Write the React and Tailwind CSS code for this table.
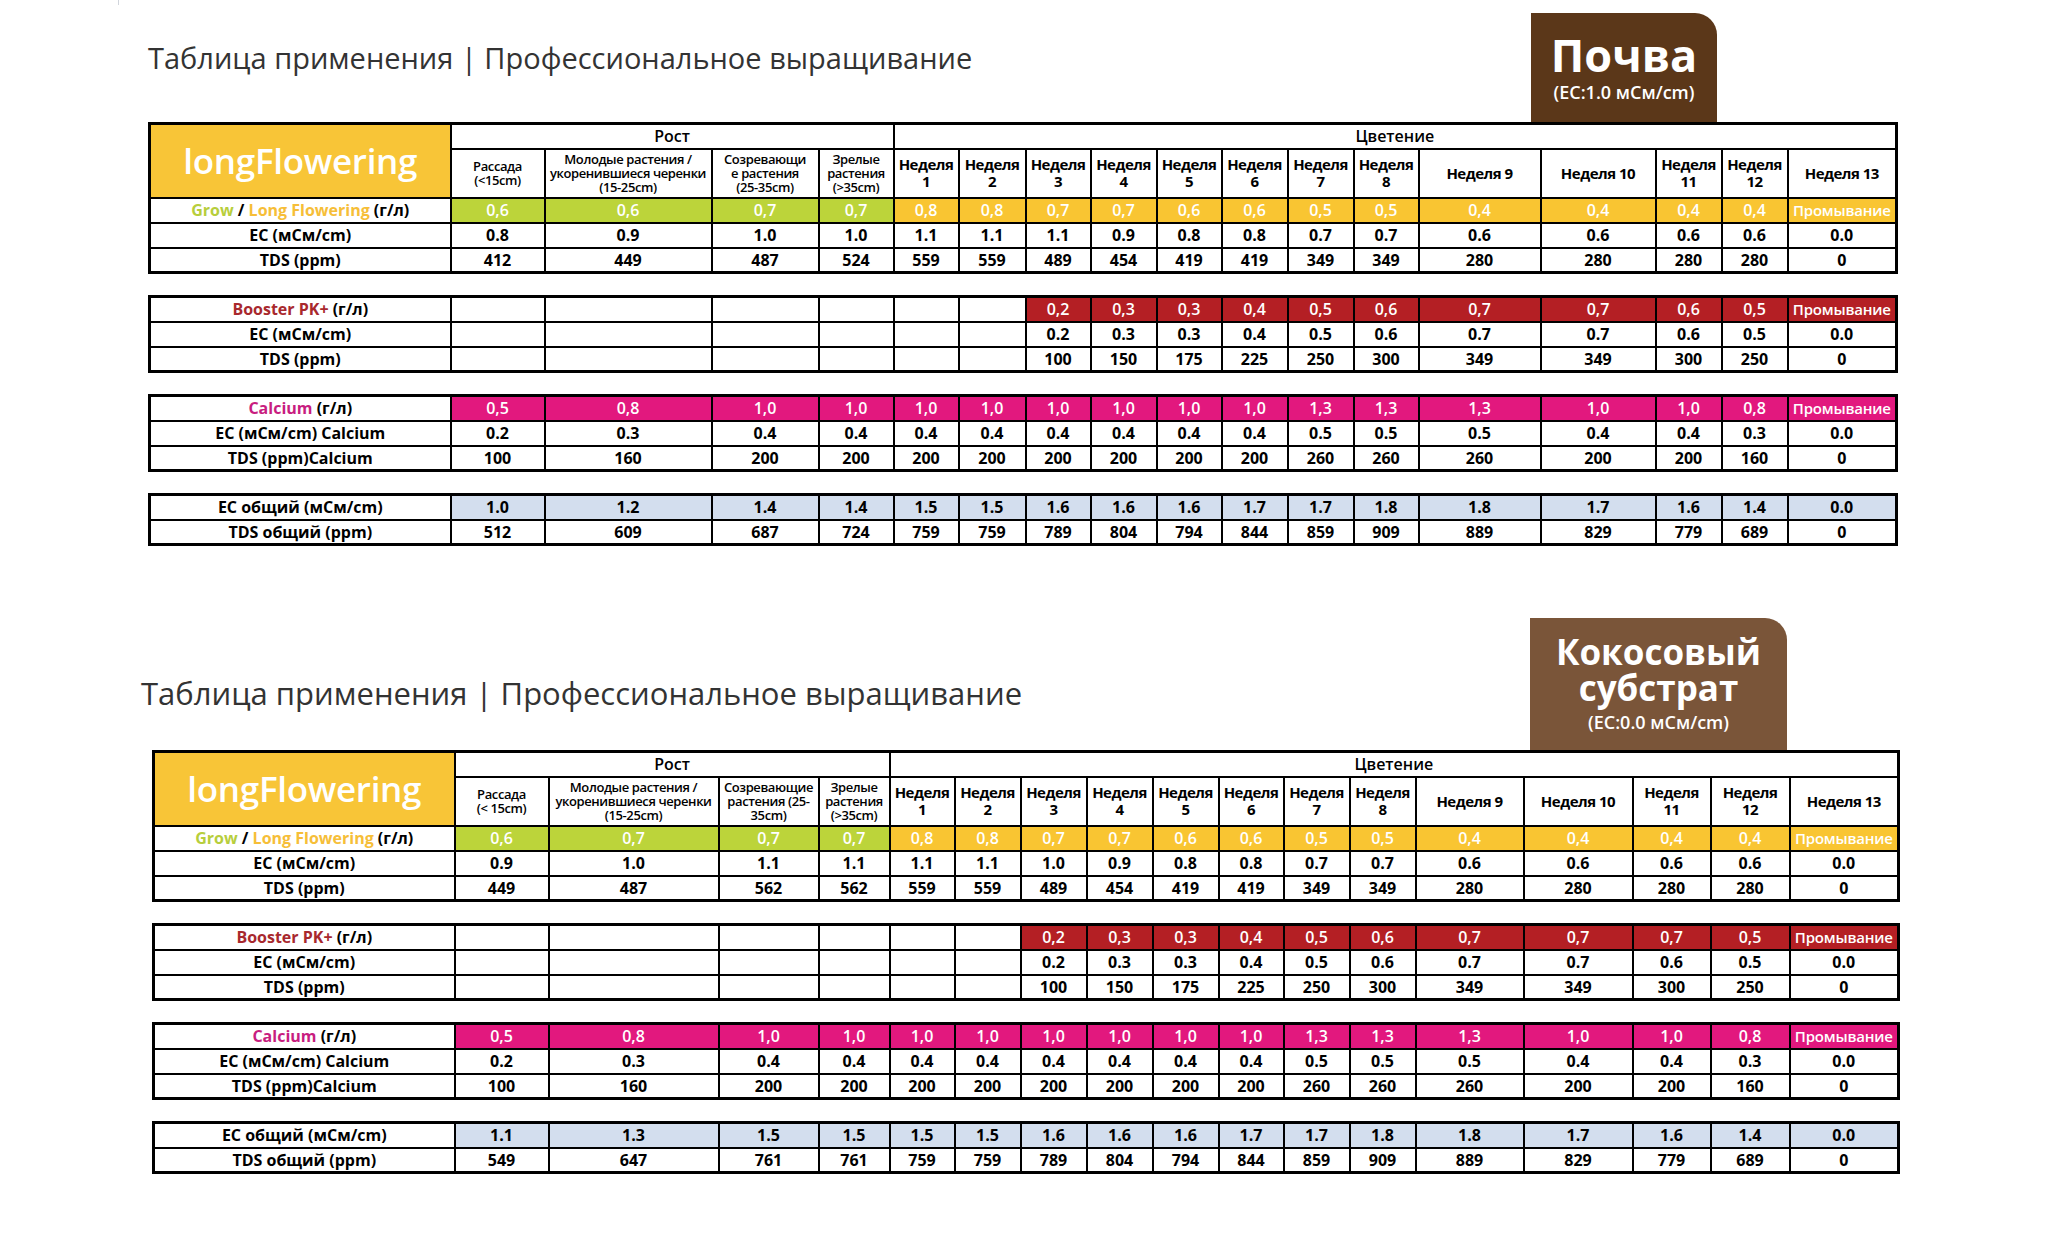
import React from 'react'

const FONT = "font-['Open_Sans','Noto_Sans',sans-serif]"

const SECTIONS = [
  {
    tab: { lines: ['Почва'], ec: '(EC:1.0 мСм/cm)', color: 'bg-[#5b3719]', h: 'h-[109px] w-[186px]', mr: 'mr-[178px]', big: 'text-[45px] leading-[46px]', ecCls: 'mt-[2px]' },
    pad: 'pl-[148px] pt-[13px]',
    titleCls: 'mt-[23px] text-[29px]',
    widths: [301, 94, 167, 107, 75, 65, 67, 65, 66, 65, 66, 66, 65, 122, 115, 66, 66, 109],
    growHead: [
      ['Рассада', '(<15cm)'],
      ['Молодые растения /', 'укоренившиеся черенки', '(15-25cm)'],
      ['Созревающи', 'е растения', '(25-35cm)'],
      ['Зрелые', 'растения', '(>35cm)'],
    ],
    weeks: [['Неделя', '1'], ['Неделя', '2'], ['Неделя', '3'], ['Неделя', '4'], ['Неделя', '5'], ['Неделя', '6'], ['Неделя', '7'], ['Неделя', '8'], ['Неделя 9'], ['Неделя 10'], ['Неделя', '11'], ['Неделя', '12'], ['Неделя 13']],
    grow: ['0,6', '0,6', '0,7', '0,7', '0,8', '0,8', '0,7', '0,7', '0,6', '0,6', '0,5', '0,5', '0,4', '0,4', '0,4', '0,4', 'Промывание'],
    ec: ['0.8', '0.9', '1.0', '1.0', '1.1', '1.1', '1.1', '0.9', '0.8', '0.8', '0.7', '0.7', '0.6', '0.6', '0.6', '0.6', '0.0'],
    tds: ['412', '449', '487', '524', '559', '559', '489', '454', '419', '419', '349', '349', '280', '280', '280', '280', '0'],
    booster: ['0,2', '0,3', '0,3', '0,4', '0,5', '0,6', '0,7', '0,7', '0,6', '0,5', 'Промывание'],
    bEc: ['0.2', '0.3', '0.3', '0.4', '0.5', '0.6', '0.7', '0.7', '0.6', '0.5', '0.0'],
    bTds: ['100', '150', '175', '225', '250', '300', '349', '349', '300', '250', '0'],
    totalEc: ['1.0', '1.2', '1.4', '1.4', '1.5', '1.5', '1.6', '1.6', '1.6', '1.7', '1.7', '1.8', '1.8', '1.7', '1.6', '1.4', '0.0'],
    totalTds: ['512', '609', '687', '724', '759', '759', '789', '804', '794', '844', '859', '909', '889', '829', '779', '689', '0'],
  },
  {
    tab: { lines: ['Кокосовый', 'субстрат'], ec: '(EC:0.0 мСм/cm)', color: 'bg-[#7a5539]', h: 'h-[132px] w-[257px]', mr: 'mr-[110px]', big: 'text-[35px] leading-[36px]', ecCls: 'mt-[4px]' },
    pad: 'pl-[152px] mt-[72px]',
    titleCls: 'mt-[53px] -ml-[11px] text-[31px]',
    widths: [301, 94, 170, 100, 71, 65, 66, 66, 66, 66, 65, 66, 66, 108, 109, 78, 79, 109],
    growHead: [
      ['Рассада', '(< 15cm)'],
      ['Молодые растения /', 'укоренившиеся черенки', '(15-25cm)'],
      ['Созревающие', 'растения (25-', '35cm)'],
      ['Зрелые', 'растения', '(>35cm)'],
    ],
    weeks: [['Неделя', '1'], ['Неделя', '2'], ['Неделя', '3'], ['Неделя', '4'], ['Неделя', '5'], ['Неделя', '6'], ['Неделя', '7'], ['Неделя', '8'], ['Неделя 9'], ['Неделя 10'], ['Неделя', '11'], ['Неделя', '12'], ['Неделя 13']],
    grow: ['0,6', '0,7', '0,7', '0,7', '0,8', '0,8', '0,7', '0,7', '0,6', '0,6', '0,5', '0,5', '0,4', '0,4', '0,4', '0,4', 'Промывание'],
    ec: ['0.9', '1.0', '1.1', '1.1', '1.1', '1.1', '1.0', '0.9', '0.8', '0.8', '0.7', '0.7', '0.6', '0.6', '0.6', '0.6', '0.0'],
    tds: ['449', '487', '562', '562', '559', '559', '489', '454', '419', '419', '349', '349', '280', '280', '280', '280', '0'],
    booster: ['0,2', '0,3', '0,3', '0,4', '0,5', '0,6', '0,7', '0,7', '0,7', '0,5', 'Промывание'],
    bEc: ['0.2', '0.3', '0.3', '0.4', '0.5', '0.6', '0.7', '0.7', '0.6', '0.5', '0.0'],
    bTds: ['100', '150', '175', '225', '250', '300', '349', '349', '300', '250', '0'],
    totalEc: ['1.1', '1.3', '1.5', '1.5', '1.5', '1.5', '1.6', '1.6', '1.6', '1.7', '1.7', '1.8', '1.8', '1.7', '1.6', '1.4', '0.0'],
    totalTds: ['549', '647', '761', '761', '759', '759', '789', '804', '794', '844', '859', '909', '889', '829', '779', '689', '0'],
  },
]

const calcium = ['0,5', '0,8', '1,0', '1,0', '1,0', '1,0', '1,0', '1,0', '1,0', '1,0', '1,3', '1,3', '1,3', '1,0', '1,0', '0,8', 'Промывание']
const caEc = ['0.2', '0.3', '0.4', '0.4', '0.4', '0.4', '0.4', '0.4', '0.4', '0.4', '0.5', '0.5', '0.5', '0.4', '0.4', '0.3', '0.0']
const caTds = ['100', '160', '200', '200', '200', '200', '200', '200', '200', '200', '260', '260', '260', '200', '200', '160', '0']

const cell = 'border-2 border-black text-center align-middle p-0 leading-[20px]'

function Cols({ widths }) {
  return (
    <colgroup>
      {widths.map((w, i) => <col key={i} style={{ width: w }} />)}
    </colgroup>
  )
}

function Label({ children }) {
  return <td className={`${cell} text-[16px] font-bold text-black whitespace-nowrap`}>{children}</td>
}

function Values({ values, fill, lead = 0 }) {
  return (
    <>
      {Array.from({ length: lead }).map((_, i) => <td key={'e' + i} className={cell} />)}
      {values.map((v, i) => {
        const bg = typeof fill === 'function' ? fill(i) : fill
        const long = v.length > 6
        return (
          <td
            key={i}
            className={`${cell} whitespace-nowrap ${long ? 'text-[15px] tracking-[-0.2px]' : 'text-[16px]'} ${bg ? `${bg} font-semibold text-white` : 'font-bold text-black'}`}
          >
            {v}
          </td>
        )
      })}
    </>
  )
}

function SubTable({ widths, rows, className = '' }) {
  return (
    <table className={`table-fixed border-collapse border-[3px] border-black ${className}`} style={{ width: widths.reduce((a, b) => a + b, 0) }}>
      <Cols widths={widths} />
      <tbody>
        {rows.map((r, i) => (
          <tr key={i} className="h-[25px]">
            <Label>{r.label}</Label>
            <Values values={r.values} fill={r.fill} lead={r.lead} />
          </tr>
        ))}
      </tbody>
    </table>
  )
}

function Tab({ tab }) {
  return (
    <div className={`${tab.color} ${tab.h} ${tab.mr} ml-auto rounded-tr-[22px] flex flex-col items-center justify-center text-white`}>
      {tab.lines.map(l => (
        <div key={l} className={`${tab.big} font-bold whitespace-nowrap`}>{l}</div>
      ))}
      <div className={`${tab.ecCls} text-[18px] leading-[24px] font-semibold whitespace-nowrap`}>{tab.ec}</div>
    </div>
  )
}

function Section({ s }) {
  const total = s.widths.reduce((a, b) => a + b, 0)
  return (
    <div className={s.pad}>
      <div className="flex items-start" style={{ width: total }}>
        <h1 className={`${s.titleCls} leading-[44px] font-normal text-[#333333] whitespace-nowrap`}>
          Таблица применения | Профессиональное выращивание
        </h1>
        <Tab tab={s.tab} />
      </div>

      {/* Grow / Long Flowering */}
      <table className="table-fixed border-collapse border-[3px] border-black" style={{ width: total }}>
        <Cols widths={s.widths} />
        <tbody>
          <tr className="h-[25px]">
            <td rowSpan={2} className={`${cell} bg-[#f8c537] text-white text-[35px] font-semibold tracking-[-0.3px]`}>
              longFlowering
            </td>
            <td colSpan={4} className={`${cell} text-[16px] font-semibold text-black`}>Рост</td>
            <td colSpan={13} className={`${cell} text-[16px] font-semibold text-black`}>Цветение</td>
          </tr>
          <tr className="h-[49px]">
            {s.growHead.map((lines, i) => (
              <td key={i} className={`${cell} !leading-[14px] text-[13px] font-semibold text-black whitespace-nowrap tracking-[-0.4px]`}>
                {lines.map(l => <div key={l}>{l}</div>)}
              </td>
            ))}
            {s.weeks.map((lines, i) => (
              <td key={i} className={`${cell} !leading-[17px] text-[15px] font-bold text-black whitespace-nowrap tracking-[-0.5px]`}>
                {lines.map(l => <div key={l}>{l}</div>)}
              </td>
            ))}
          </tr>
          <tr className="h-[25px]">
            <Label>
              <span className="text-[#b7ce3c]">Grow</span> / <span className="text-[#f6be38]">Long Flowering</span> (г/л)
            </Label>
            <Values values={s.grow} fill={i => (i < 4 ? 'bg-[#bcd43a]' : 'bg-[#f9c532]')} />
          </tr>
          <tr className="h-[25px]">
            <Label>EC (мСм/cm)</Label>
            <Values values={s.ec} />
          </tr>
          <tr className="h-[25px]">
            <Label>TDS (ppm)</Label>
            <Values values={s.tds} />
          </tr>
        </tbody>
      </table>

      <SubTable
        widths={s.widths}
        className="mt-[21px]"
        rows={[
          { label: <><span className="text-[#a8282d]">Booster PK+</span> (г/л)</>, values: s.booster, fill: 'bg-[#b41f24]', lead: 6 },
          { label: 'EC (мСм/cm)', values: s.bEc, lead: 6 },
          { label: 'TDS (ppm)', values: s.bTds, lead: 6 },
        ]}
      />

      <SubTable
        widths={s.widths}
        className="mt-[21px]"
        rows={[
          { label: <><span className="text-[#c81d80]">Calcium</span> (г/л)</>, values: calcium, fill: 'bg-[#e2187e]' },
          { label: 'EC (мСм/cm) Calcium', values: caEc },
          { label: 'TDS (ppm)Calcium', values: caTds },
        ]}
      />

      <SubTable
        widths={s.widths}
        className="mt-[21px]"
        rows={[
          { label: 'EC общий (мСм/cm)', values: s.totalEc, fill: 'bg-[#d3deee] !text-black !font-bold' },
          { label: 'TDS общий (ppm)', values: s.totalTds },
        ]}
      />
    </div>
  )
}

export default function App() {
  return (
    <div className={`${FONT} relative w-[2048px] min-h-[1247px] bg-white`}>
      <div className="absolute left-[118px] top-0 w-px h-[5px] bg-gray-300" />
      {SECTIONS.map((s, i) => <Section key={i} s={s} />)}
    </div>
  )
}
